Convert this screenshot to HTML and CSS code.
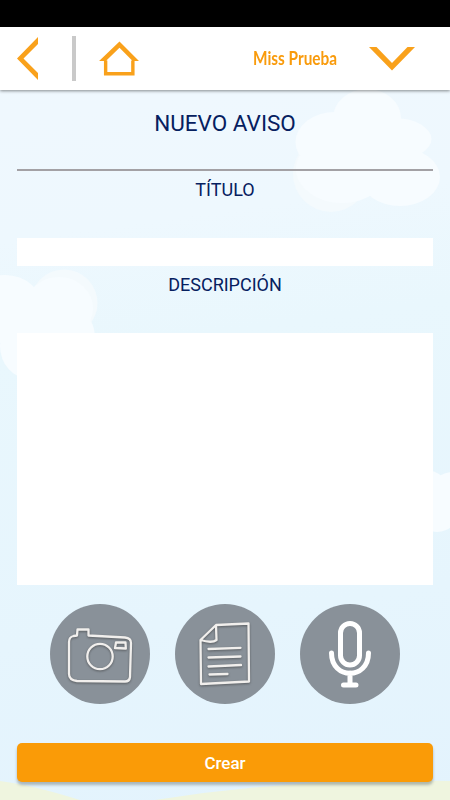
FILE: index.html
```html
<!DOCTYPE html>
<html lang="es">
<head>
<meta charset="utf-8">
<meta name="viewport" content="width=device-width">
<title>Nuevo aviso</title>
<link rel="stylesheet" href="styles.css">
</head>
<body>
<div class="screen">
  <svg class="scenery" viewBox="0 0 450 800" aria-hidden="true">
    <g fill="#f4fafd">
      <circle cx="331" cy="174" r="38"/>
      <circle cx="64" cy="303" r="33.5"/>
    </g>
    <g fill="#f7fcff">
      <ellipse cx="367" cy="118" rx="34" ry="29"/>
      <ellipse cx="335" cy="142" rx="39.5" ry="30"/>
      <ellipse cx="394" cy="139" rx="37.5" ry="21"/>
      <ellipse cx="342" cy="169" rx="46" ry="34"/>
      <ellipse cx="400" cy="177" rx="40" ry="29"/>
      <ellipse cx="5" cy="309" rx="38" ry="34"/>
      <ellipse cx="59" cy="308" rx="34" ry="31"/>
      <ellipse cx="61" cy="337" rx="34" ry="34"/>
      <ellipse cx="30" cy="346" rx="30" ry="33"/>
      <ellipse cx="425" cy="494" rx="25" ry="24"/>
      <ellipse cx="453" cy="492" rx="22" ry="20"/>
      <ellipse cx="437" cy="510" rx="22" ry="22"/>
    </g>
    <path d="M0 781Q32 785 80 800H0Z" fill="#eff5df"/>
    <path d="M155 800Q300 777 450 781V800Z" fill="#eff5df"/>
  </svg>
  <div class="status-bar"></div>
  <header class="toolbar">
    <svg class="back" viewBox="0 0 22 44"><path d="M21 0V7L6.500 21.500L21 36V43L0 21.500Z"/></svg>
    <span class="divider"></span>
    <svg class="home" viewBox="0 0 42 36"><path d="M0 20.500L21 0.500L41 20.500H34.500L21 7L7 20.500ZM5 20H8.500V32H33V20H36.500V35.500H5Z"/></svg>
    <span class="user">Miss Prueba</span>
    <svg class="chevron" viewBox="0 0 46 24"><path d="M0 0H7.500L23 16L38.500 0H46L23 23.500Z"/></svg>
  </header>
  <main class="form">
    <h1>NUEVO AVISO</h1>
    <label for="title">TÍTULO</label>
    <input id="title" type="text">
    <label for="description">DESCRIPCIÓN</label>
    <textarea id="description"></textarea>
    <div class="attachments">
      <button class="round" aria-label="Foto">
        <svg viewBox="0 0 100 100" class="sketch">
          <path d="M23.500 32L27 31.500L27.500 25.500H38.500V31.500L75 33.500Q81 34 81 39L80 73Q79.500 77.500 75 77.500L27 77Q19 76 19 70V38Q19 33 23.500 32Z"/>
          <circle cx="50" cy="52.500" r="12.700"/>
          <path d="M66 38.500H75.500L75.800 44.500L65 44Z"/>
        </svg>
      </button>
      <button class="round" aria-label="Documento">
        <svg viewBox="0 0 100 100" class="sketch">
          <path d="M41 21L73.500 19.500L74 77.500L26 80L25.500 36ZM41 21L41.500 36Q37 39.500 25.500 36Z"/>
          <path d="M33.500 45L65.500 43.800M33.500 53.500L65.500 52.500M33.500 62.500L66 61M34.500 70.500L52.500 70"/>
        </svg>
      </button>
      <button class="round" aria-label="Audio">
        <svg viewBox="0 0 100 100" class="mic">
          <rect x="40.500" y="19.500" width="19" height="41.500" rx="9.500"/>
          <path d="M31.500 49C31.500 76 68.500 76 68.500 49M50 69V81M43.500 81H56"/>
        </svg>
      </button>
    </div>
    <button class="submit">Crear</button>
  </main>
</div>
</body>
</html>
```
FILE: styles.css
```css
* { box-sizing: border-box; }
body { margin: 0; font-family: Roboto, sans-serif; color: #06205f; }
.screen {
  position: relative;
  width: 450px;
  height: 800px;
  overflow: hidden;
  display: flex;
  flex-direction: column;
  background: linear-gradient(172deg, #f0f8fe 0%, #eef8fe 28%, #e9f7fd 42%, #e6f5fd 75%, #e3f3fd 100%);
}
.scenery { position: absolute; inset: 0; width: 100%; height: 100%; }
.status-bar { height: 27px; background: #000; position: relative; }
.toolbar {
  position: relative;
  height: 63px;
  display: flex;
  align-items: center;
  padding: 0 35px 0 17px;
  background: #fff;
  box-shadow: 0 1px 3px rgba(0, 0, 0, .45);
}
.toolbar svg { fill: #f9a11b; }
.back { width: 22px; height: 44px; }
.divider { width: 4px; height: 45px; margin: 0 23px 0 33px; background: #c9c9c9; }
.home { width: 41px; height: 35px; }
.user {
  width: 85px;
  margin: 0 0 2px 113px;
  font: 700 18.500px/26px Lato, sans-serif;
  white-space: nowrap;
  color: #f99b0c;
  transform: scaleX(.83);
  transform-origin: left;
}
.chevron { width: 46px; height: 24px; margin-left: auto; }
.form {
  position: relative;
  flex: 1;
  display: flex;
  flex-direction: column;
  padding: 0 17px;
}
h1 {
  height: 81px;
  margin: 0;
  padding-top: 18px;
  border-bottom: 2px solid #a3a1a5;
  font-size: 22.500px;
  line-height: 31px;
  font-weight: 400;
  text-align: center;
}
label { height: 67px; padding-top: 6px; font-size: 18px; line-height: 26px; text-align: center; }
input, textarea { display: block; width: 100%; border: 0; padding: 4px 8px; background: #fff; resize: none; font: 16px Roboto, sans-serif; }
input { height: 28px; }
textarea { height: 252px; }
.attachments { display: flex; justify-content: center; gap: 24.700px; margin-top: 19px; }
button { border: 0; padding: 0; }
.round {
  width: 100px;
  height: 100px;
  border-radius: 50%;
  background: #899199;
}
.round svg { display: block; width: 100px; height: 100px; fill: none; stroke-linecap: round; stroke-linejoin: round; }
.sketch { stroke: #f1efed; stroke-width: 2.300; filter: drop-shadow(.5px 1px 1px rgba(50, 50, 50, .55)); }
.mic { stroke: #fff; stroke-width: 5; }
.submit {
  height: 39px;
  margin-top: 39px;
  padding-top: 1px;
  border-radius: 5px;
  background: #fa9b07;
  box-shadow: 0 3px 3px rgba(80, 90, 90, .4);
  color: #fff;
  font: 500 17px/38px Roboto, sans-serif;
}
```
